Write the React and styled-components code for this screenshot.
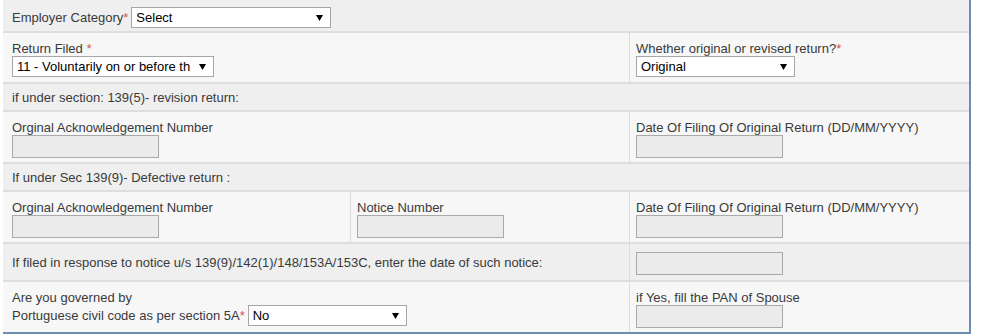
import React from 'react';
import styled, {createGlobalStyle} from 'styled-components';

const GlobalStyle = createGlobalStyle`
  html, body {
    margin: 0;
    padding: 0;
    background: #fff;
  }
  body {
    font-family: "Liberation Sans", Arial, sans-serif;
    font-size: 13px;
    color: #3a3a3a;
  }
`;

const Panel = styled.div`
  width: 966px;
  margin-left: 3px;
  border-right: 2px solid #6f8db0;
  border-bottom: 2px solid #6f8db0;
  background: #fff;
`;

const Row = styled.div`
  display: grid;
  grid-template-columns: ${p => p.cols || '1fr'};
  min-height: ${p => p.h}px;
  background: ${p => (p.dark ? '#efefef' : '#f7f7f7')};
  border-top: ${p => (p.first ? 'none' : '2px solid #dedede')};
`;

const Cell = styled.div`
  display: flex;
  flex-direction: ${p => (p.inline ? 'row' : 'column')};
  align-items: ${p => (p.inline ? 'center' : 'flex-start')};
  justify-content: ${p => (p.center ? 'center' : 'flex-start')};
  padding: ${p => p.pad || '8px 6px 4px'};
  padding-left: ${p => (p.divider ? '6px' : '9px')};
  border-left: ${p => (p.divider ? '1px solid #dcdcdc' : 'none')};
  min-width: 0;
`;

const Label = styled.div`
  line-height: 15px;
  white-space: nowrap;
`;

const Line = styled.div`
  display: flex;
  align-items: center;
  gap: 3px;
  white-space: nowrap;
`;

const Req = styled.span`
  color: #d9534f;
`;

const SelectBox = styled.div`
  display: flex;
  align-items: center;
  box-sizing: border-box;
  width: ${p => p.w}px;
  height: 21px;
  margin-left: ${p => p.ml || 0}px;
  padding: 0 7px 0 4px;
  border: 1px solid #a6a6a6;
  background: #fff;
  color: #000;
  font-size: 13px;
  cursor: default;
`;

const SelectText = styled.span`
  flex: 1;
  margin-right: 4px;
  overflow: hidden;
  white-space: nowrap;
`;

const Arrow = () => (
  <svg width="7" height="6" viewBox="0 0 7 6">
    <polygon points="0,0 7,0 3.5,6" fill="#000" />
  </svg>
);

const Select = ({w, ml, children}) => (
  <SelectBox w={w} ml={ml}>
    <SelectText>{children}</SelectText>
    <Arrow />
  </SelectBox>
);

const TextBox = styled.input`
  box-sizing: border-box;
  width: 147px;
  height: 23px;
  margin: 0;
  padding: 0 3px;
  border: 1px solid #a9a9a9;
  background: #ebebeb;
  outline: none;
`;

const THREE = '347px 279px 340px';
const TWO = '626px 340px';

export default function App() {
  return (
    <>
      <GlobalStyle />
      <Panel>
        <Row first dark h={31}>
          <Cell inline pad="7px 6px 3px">
            <Label>Employer Category<Req>*</Req></Label>
            <Select w={200} ml={3}>Select</Select>
          </Cell>
        </Row>

        <Row cols={TWO} h={49}>
          <Cell>
            <Label>Return Filed <Req>*</Req></Label>
            <Select w={202}>11 - Voluntarily on or before th</Select>
          </Cell>
          <Cell divider>
            <Label>Whether original or revised return?<Req>*</Req></Label>
            <Select w={159}>Original</Select>
          </Cell>
        </Row>

        <Row dark h={26}>
          <Cell center pad="5px 6px">
            <Label>if under section: 139(5)- revision return:</Label>
          </Cell>
        </Row>

        <Row cols={TWO} h={50}>
          <Cell>
            <Label>Orginal Acknowledgement Number</Label>
            <TextBox readOnly />
          </Cell>
          <Cell divider>
            <Label>Date Of Filing Of Original Return (DD/MM/YYYY)</Label>
            <TextBox readOnly />
          </Cell>
        </Row>

        <Row dark h={26}>
          <Cell center pad="5px 6px">
            <Label>If under Sec 139(9)- Defective return :</Label>
          </Cell>
        </Row>

        <Row cols={THREE} h={50}>
          <Cell>
            <Label>Orginal Acknowledgement Number</Label>
            <TextBox readOnly />
          </Cell>
          <Cell divider>
            <Label>Notice Number</Label>
            <TextBox readOnly />
          </Cell>
          <Cell divider>
            <Label>Date Of Filing Of Original Return (DD/MM/YYYY)</Label>
            <TextBox readOnly />
          </Cell>
        </Row>

        <Row cols={TWO} dark h={36}>
          <Cell center pad="5px 6px">
            <Label>If filed in response to notice u/s 139(9)/142(1)/148/153A/153C, enter the date of such notice:</Label>
          </Cell>
          <Cell divider pad="8px 6px 5px">
            <TextBox readOnly />
          </Cell>
        </Row>

        <Row cols={TWO} h={50}>
          <Cell>
            <Label>Are you governed by</Label>
            <Line>
              <span>Portuguese civil code as per section 5A<Req>*</Req></span>
              <Select w={159}>No</Select>
            </Line>
          </Cell>
          <Cell divider>
            <Label>if Yes, fill the PAN of Spouse</Label>
            <TextBox readOnly />
          </Cell>
        </Row>
      </Panel>
    </>
  );
}
